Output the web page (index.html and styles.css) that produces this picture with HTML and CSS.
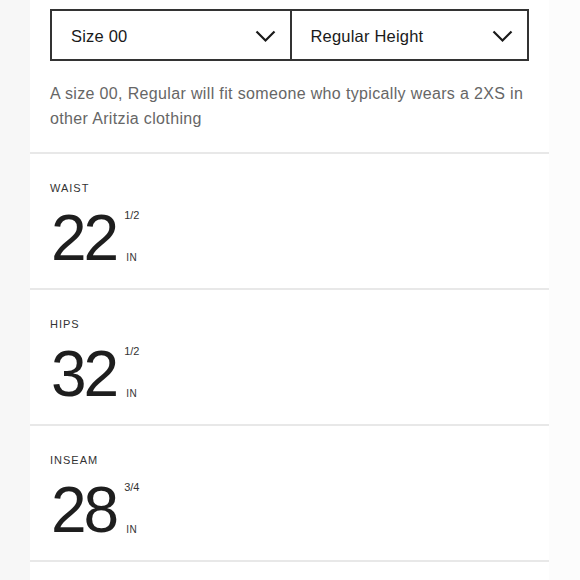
FILE: index.html
```html
<!DOCTYPE html>
<html lang="en">
<head>
<meta charset="utf-8">
<title>Size guide</title>
<link rel="stylesheet" href="styles.css">
</head>
<body>
<div class="page">
  <div class="gutter-left"></div>
  <main class="panel">
    <section class="intro">
      <div class="selects">
        <div class="select">
          <span>Size 00</span>
          <svg class="chev" width="21" height="13" viewBox="0 0 21 13"><polyline points="1.5,1.5 10.5,10.5 19.5,1.5" fill="none" stroke="#1a1a1a" stroke-width="2.2"/></svg>
        </div>
        <div class="select">
          <span>Regular Height</span>
          <svg class="chev" width="21" height="13" viewBox="0 0 21 13"><polyline points="1.5,1.5 10.5,10.5 19.5,1.5" fill="none" stroke="#1a1a1a" stroke-width="2.2"/></svg>
        </div>
      </div>
      <p class="desc">A size 00, Regular will fit someone who typically wears a 2XS in other Aritzia clothing</p>
    </section>
    <section class="measure">
      <div class="label">WAIST</div>
      <div class="value">
        <span class="num">22</span>
        <span class="unit"><span class="frac">1/2</span><span class="in">IN</span></span>
      </div>
    </section>
    <section class="measure">
      <div class="label">HIPS</div>
      <div class="value">
        <span class="num">32</span>
        <span class="unit"><span class="frac">1/2</span><span class="in">IN</span></span>
      </div>
    </section>
    <section class="measure">
      <div class="label">INSEAM</div>
      <div class="value">
        <span class="num">28</span>
        <span class="unit"><span class="frac">3/4</span><span class="in">IN</span></span>
      </div>
    </section>
  </main>
  <div class="gutter-right"></div>
</div>
</body>
</html>
```

FILE: styles.css
```css
* { box-sizing: border-box; }
html, body { margin: 0; padding: 0; }
body {
  font-family: "Liberation Sans", Arial, sans-serif;
  background: #ffffff;
  color: #222;
}
.page {
  display: grid;
  grid-template-columns: 30px 519px 1fr;
  min-height: 580px;
}
.gutter-left { background: #f7f7f7; }
.gutter-right { background: #fcfcfc; }
.panel { background: #fff; padding: 9px 0 0 0; }
.intro {
  padding: 0 20px;
  border-bottom: 2px solid #e8e8e8;
  height: 145px;
}
.selects {
  display: grid;
  grid-template-columns: 1fr 1fr;
  border: 2px solid #333;
  height: 52px;
}
.select {
  display: flex;
  align-items: center;
  justify-content: space-between;
  padding: 3px 14px 0 19px;
  font-size: 16.5px;
  color: #1a1a1a;
  letter-spacing: 0.2px;
}
.select + .select { border-left: 2px solid #333; }
.chev { display: block; margin-top: -1px; }
.desc {
  margin: 20px 0 0 0;
  font-size: 16px;
  line-height: 25px;
  color: #666;
  letter-spacing: 0.35px;
}
.measure {
  height: 136px;
  padding: 28px 0 0 20px;
  border-bottom: 2px solid #e8e8e8;
}
.label {
  font-size: 11px;
  line-height: 13px;
  letter-spacing: 1px;
  color: #333;
}
.value {
  display: flex;
  align-items: stretch;
  margin-top: 11px;
}
.num {
  font-size: 64px;
  line-height: 64px;
  letter-spacing: -3px;
  color: #1e1e1e;
  margin-left: 1px;
}
.unit {
  display: flex;
  flex-direction: column;
  align-items: center;
  justify-content: space-between;
  margin-left: 8px;
  padding: 4px 0 7px;
  color: #333;
}
.frac { font-size: 11px; line-height: 11px; }
.in { font-size: 10px; line-height: 10px; letter-spacing: 0.5px; }
```
